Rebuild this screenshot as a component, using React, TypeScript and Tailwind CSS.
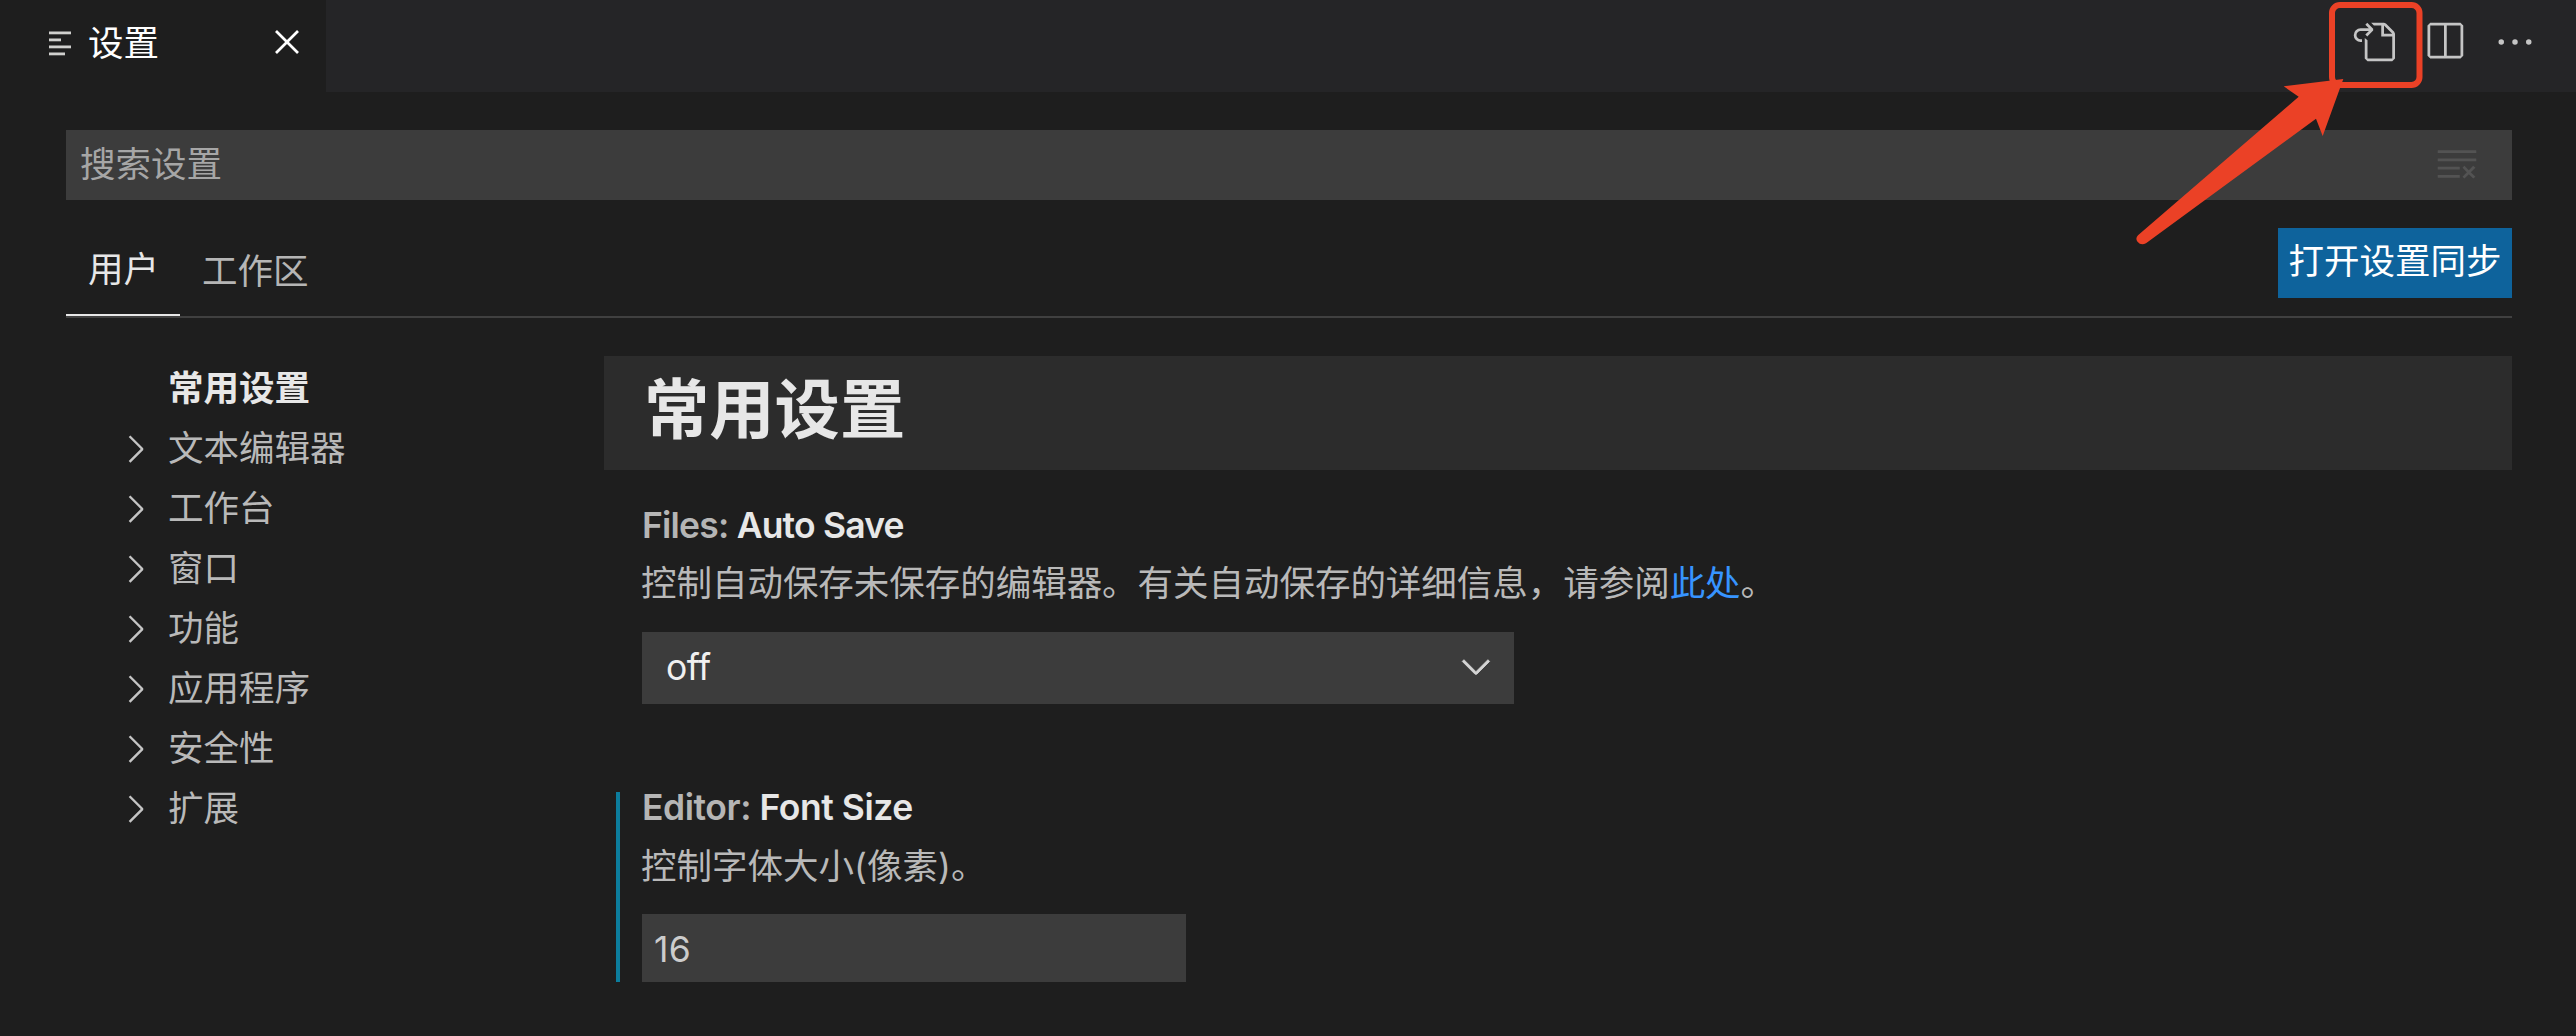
import React from "react";

const ICONS = {
  close:
    "M8 8.707l3.646 3.647.708-.707L8.707 8l3.647-3.646-.707-.708L8 7.293 4.354 3.646l-.707.708L7.293 8l-3.646 3.646.707.708L8 8.707z",
  goToFile:
    "M6 5.914l2.06-2.06v-.708L5.915 1l-.707.707.043.043.25.25 1 1h-3a2.5 2.5 0 0 0 0 5H4V7h-.5a1.5 1.5 0 1 1 0-3h3L5.207 5.293 5.914 6 6 5.914zM11 2H8.328l-1-1H12l.71.29 3 3L16 5v9l-1 1H6l-1-1V6.5l1 .847V14h9V6h-4V2zm1 0v3h3l-3-3z",
  split:
    "M14 1H3L2 2v11l1 1h11l1-1V2l-1-1zM8 13H3V2h5v11zm6 0H9V2h5v11z",
  more: "M4 8a1 1 0 1 1-2 0 1 1 0 0 1 2 0zm5 0a1 1 0 1 1-2 0 1 1 0 0 1 2 0zm5 0a1 1 0 1 1-2 0 1 1 0 0 1 2 0z",
  clearAll:
    "M10 12.6l.7.7 1.6-1.6 1.6 1.6.8-.7L13 11l1.7-1.6-.8-.8-1.6 1.7-1.6-1.7-.7.8 1.6 1.6-1.6 1.6zM1 4h14V3H1v1zm0 3h14V6H1v1zm8 2.5V9H1v1h8v-.5zM9 13v-1H1v1h8z",
  chevronRight:
    "M10.072 8.024L5.715 3.667l.618-.62L11 7.716v.618L6.333 13l-.618-.619 4.357-4.357z",
  chevronDown:
    "M7.976 10.072l4.357-4.357.62.618L8.284 11h-.618L3 6.333l.619-.618 4.357 4.357z",
};

function Icon({ name, className = "" }: { name: keyof typeof ICONS; className?: string }) {
  return (
    <svg viewBox="0 0 16 16" fill="currentColor" fillRule="evenodd" className={`h-[44px] w-[44px] shrink-0 ${className}`}>
      <path d={ICONS[name]} />
    </svg>
  );
}

const SECTIONS = ["文本编辑器", "工作台", "窗口", "功能", "应用程序", "安全性", "扩展"];

function TabBar() {
  return (
    <header className="flex h-[92px] shrink-0 bg-[#252527]">
      <div className="flex h-full w-[326px] items-start bg-[#1e1e1e]">
        <svg viewBox="0 0 22 26" className="ml-[49px] mt-[31px] h-[26px] w-[22px] shrink-0 fill-[#d0d0ce]">
          <rect y="0.5" width="22" height="2.8" />
          <rect y="7.5" width="12" height="2.8" />
          <rect y="14.5" width="22" height="2.8" />
          <rect y="21.5" width="16" height="2.8" />
        </svg>
        <span className="ml-[17px] mt-[24px] leading-[40px] text-white">设置</span>
        <Icon name="close" className="ml-auto mr-[17px] mt-[20px] text-white" />
      </div>
      <div className="ml-auto mt-[20px] flex pr-[39px] text-[#c5c5c5]">
        <Icon name="goToFile" className="mr-[27px]" />
        <Icon name="split" className="mr-[27px]" />
        <Icon name="more" />
      </div>
    </header>
  );
}

function ScopeBar() {
  return (
    <div className="mt-[28px] flex h-[90px] items-start justify-between border-b-2 border-[#404040]">
      <div className="flex h-[88px] items-start">
        <div className="h-full w-[114px] border-b-2 border-[#e7e7e7] pl-[22px] pt-[22px] leading-[40px] text-[#e7e7e7]">
          用户
        </div>
        <div className="pl-[22px] pt-[24px] leading-[40px] text-[#b5b5b5]">工作区</div>
      </div>
      <button className="h-[70px] w-[234px] whitespace-nowrap bg-[#0e639c] pb-[2px] text-center leading-[68px] text-white">
        打开设置同步
      </button>
    </div>
  );
}

function TableOfContents() {
  return (
    <nav className="w-[538px] shrink-0 pl-[47px] text-[#b9b9b9]">
      <div className="flex h-[60px] items-center pl-[55px] pt-[5px] font-bold text-[#e7e7e7]">常用设置</div>
      {SECTIONS.map((name) => (
        <div key={name} className="flex h-[60px] items-center">
          <Icon name="chevronRight" className="mr-[11px] mt-[5px] text-[#c5c5c5]" />
          <span className="pt-[5px]">{name}</span>
        </div>
      ))}
    </nav>
  );
}

function SettingTitle({ group, name, className }: { group: string; name: string; className: string }) {
  return (
    <h3 className={`whitespace-nowrap font-semibold leading-[44px] ${className}`}>
      <span className="text-[#b5b5b5]">{group}: </span>
      <span className="text-[#e7e7e7]">{name}</span>
    </h3>
  );
}

export default function App() {
  return (
    <div className="relative flex h-[1036px] w-[2576px] flex-col overflow-hidden bg-[#1e1e1e] font-[Inter,'Noto_Sans_CJK_SC',sans-serif] text-[35.5px]">
      <TabBar />
      <main className="mx-[64px] mt-[38px] pl-[2px]">
        <div className="flex h-[70px] items-center justify-between bg-[#3c3c3c] pl-[14px] pr-[33px]">
          <span className="pb-[1px] leading-[40px] text-[#a6a6a6]">搜索设置</span>
          <Icon name="clearAll" className="mt-[-3px] text-[#535353]" />
        </div>
        <ScopeBar />
        <div className="mt-[38px] flex">
          <TableOfContents />
          <section className="min-w-0 flex-1">
            <h2 className="h-[114px] bg-[#2c2c2c] pl-[40px] text-[65.3px] font-bold leading-[107px] text-[#e7e7e7]">
              常用设置
            </h2>
            <article className="pl-[38px] pt-[34px]">
              <SettingTitle group="Files" name="Auto Save" className="tracking-[-0.8px]" />
              <p className="ml-[-1px] mt-[14px] whitespace-nowrap leading-[44px] tracking-[-0.03px] text-[#b9b9b9]">
                控制自动保存未保存的编辑器。有关自动保存的详细信息，请参阅
                <a className="text-[#3794ff]">此处</a>。
              </p>
              <div className="mt-[26px] flex h-[72px] w-[872px] items-center justify-between bg-[#3c3c3c] pl-[24px] pr-[16px] text-[#f0f0f0]">
                <span className="tracking-[-0.5px]">off</span>
                <Icon name="chevronDown" className="mb-[5px] stroke-current stroke-[0.3] text-[#d4d4d4]" />
              </div>
            </article>
            <article className="ml-[12px] mt-[88px] flex h-[190px] flex-col border-l-4 border-[#0c7d9d] pl-[22px]">
              <SettingTitle group="Editor" name="Font Size" className="mt-[-6px] tracking-[-0.45px]" />
              <p className="ml-[-1px] mt-[15px] whitespace-nowrap leading-[44px] text-[#b9b9b9]">控制字体大小(像素)。</p>
              <div className="mt-[25px] h-[68px] w-[544px] bg-[#3c3c3c] pl-[12px] leading-[71px] tracking-[0.4px] text-[#cccccc]">16</div>
            </article>
          </section>
        </div>
      </main>

      <svg viewBox="0 0 300 250" className="pointer-events-none absolute left-[2130px] top-0 h-[250px] w-[300px]">
        <rect x="202" y="5" width="87.5" height="80" rx="8" fill="none" stroke="#eb4126" strokeWidth="6" />
        <path
          d="M213.3 79L153.7 86.3L168.7 96.7L8 235.2Q5 238.500 7.500 241.800Q11 246 16 243.300L186 118.700L192.700 136Z"
          fill="#eb4126"
        />
      </svg>
    </div>
  );
}
